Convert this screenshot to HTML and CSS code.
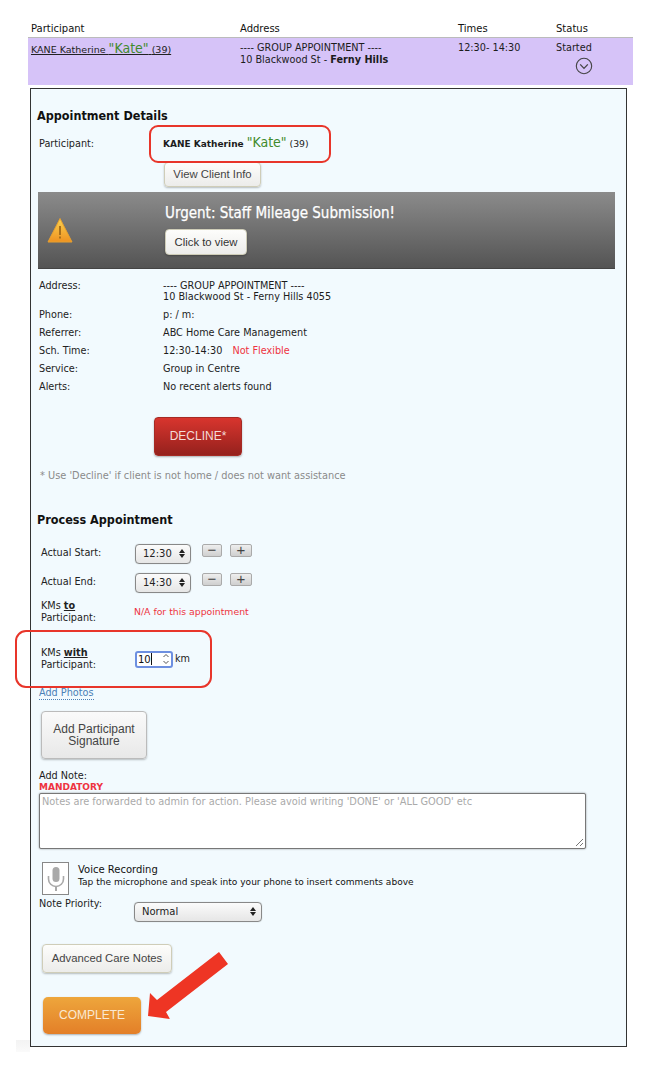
FILE: index.html
```html
<!DOCTYPE html>
<html lang="en">
<head>
<meta charset="utf-8">
<title>Appointment</title>
<link rel="stylesheet" href="styles.css">
</head>
<body>
<div class="page">
  <div class="thead">
    <div class="c1">Participant</div><div class="c2">Address</div><div class="c3">Times</div><div class="c4">Status</div>
  </div>
  <div class="trow">
    <div class="c1 clink"><u>KANE Katherine <span class="nick">"Kate"</span> </u><u>(39)</u></div>
    <div class="c2">---- GROUP APPOINTMENT ----<br>10 Blackwood St - <b>Ferny Hills</b></div>
    <div class="c3">12:30- 14:30</div>
    <div class="c4">Started
      <svg class="chev" width="18" height="18" viewBox="0 0 18 18"><circle cx="9" cy="9" r="7.7" fill="none" stroke="#444" stroke-width="1.1"/><path d="M5.2 7.4 9 11.4l3.8-4" fill="none" stroke="#444" stroke-width="1.3"/></svg>
    </div>
  </div>

  <div class="panel">
    <h2 class="h-details">Appointment Details</h2>
    <div class="row r-part">
      <div class="lab">Participant:</div>
      <div class="val"><b class="pname">KANE Katherine</b> <span class="nick2">"Kate"</span> (39)</div>
    </div>
    <div class="btn-line"><a class="btn b-client">View Client Info</a></div>
    <div class="banner">
      <svg class="warn" width="26" height="26" viewBox="0 0 26 26"><defs><linearGradient id="wg" x1="0" y1="0" x2="0" y2="1"><stop offset="0" stop-color="#fbd24f"/><stop offset="1" stop-color="#ee9221"/></linearGradient></defs><path d="M13 1.5 25 25H1z" fill="url(#wg)" stroke="#e9a12e" stroke-width="1" stroke-linejoin="round"/><rect x="12" y="9" width="2" height="9" fill="#a8701c"/><rect x="12" y="19.5" width="2" height="2" fill="#a8701c"/></svg>
      <div class="banner-main">
        <div class="banner-title">Urgent: Staff Mileage Submission!</div>
        <a class="btn b-view">Click to view</a>
      </div>
    </div>

    <div class="row r-addr"><div class="lab">Address:</div><div class="val">---- GROUP APPOINTMENT ----<br>10 Blackwood St - Ferny Hills 4055</div></div>
    <div class="row r-info"><div class="lab">Phone:</div><div class="val">p: / m:</div></div>
    <div class="row r-info"><div class="lab">Referrer:</div><div class="val">ABC Home Care Management</div></div>
    <div class="row r-info"><div class="lab">Sch. Time:</div><div class="val">12:30-14:30 <span class="red flex-note">Not Flexible</span></div></div>
    <div class="row r-info"><div class="lab">Service:</div><div class="val">Group in Centre</div></div>
    <div class="row r-info"><div class="lab">Alerts:</div><div class="val">No recent alerts found</div></div>

    <a class="btn-decline">DECLINE*</a>
    <p class="decline-note">* Use 'Decline' if client is not home / does not want assistance</p>

    <h2 class="h-process">Process Appointment</h2>
    <div class="prow r-start">
      <div class="plab">Actual Start:</div>
      <div class="sel sel-time">12:30<span class="updown"></span></div>
      <span class="step">&#8722;</span><span class="step s-plus">+</span>
    </div>
    <div class="prow r-end">
      <div class="plab">Actual End:</div>
      <div class="sel sel-time">14:30<span class="updown"></span></div>
      <span class="step">&#8722;</span><span class="step s-plus">+</span>
    </div>
    <div class="prow r-kmto">
      <div class="plab">KMs <u><b>to</b></u><br>Participant:</div>
      <div class="na red">N/A for this appointment</div>
    </div>
    <div class="prow r-kmwith">
      <div class="plab">KMs <u><b>with</b></u><br>Participant:</div>
      <div class="numbox">10<span class="caret"></span><span class="spin"><svg width="8" height="12" viewBox="0 0 8 12"><path d="M1.5 4 4 1.5 6.5 4M1.5 8 4 10.5 6.5 8" fill="none" stroke="#555" stroke-width="1"/></svg></span></div>
      <span class="km">km</span>
    </div>
    <a class="photos">Add Photos</a>
    <a class="btn b-sign">Add Participant<br>Signature</a>
    <div class="notelab">Add Note:<br><span class="red mand">MANDATORY</span></div>
    <div class="textarea">Notes are forwarded to admin for action. Please avoid writing 'DONE' or 'ALL GOOD' etc
      <svg class="grip" width="9" height="9" viewBox="0 0 9 9"><path d="M1 8 8 1M5 8 8 5" stroke="#777" stroke-width="1"/></svg>
    </div>
    <div class="voice">
      <div class="micbox"><svg width="20" height="28" viewBox="0 0 20 28"><rect x="6.5" y="2" width="7" height="15" rx="3.5" fill="#a9a9a9"/><path d="M2.5 11v3a7.5 7.5 0 0 0 15 0v-3" fill="none" stroke="#a9a9a9" stroke-width="1.6"/><path d="M10 21.5V26" stroke="#a9a9a9" stroke-width="2"/></svg></div>
      <div class="voice-text"><span class="voice-title">Voice Recording</span><br>Tap the microphone and speak into your phone to insert comments above</div>
    </div>
    <div class="priority">
      <div class="prlab">Note Priority:</div>
      <div class="sel sel-pri">Normal<span class="updown"></span></div>
    </div>
    <a class="btn b-care">Advanced Care Notes</a>
    <a class="btn-complete">COMPLETE</a>
  </div>

  <div class="mark mark-name"></div>
  <div class="mark mark-km"></div>
  <svg class="arrow" width="654" height="1088" viewBox="0 0 654 1088"><polygon points="219,952 228,964 166,1012 170,1019 148,1016 150,993 157,1000" fill="#ee3524"/></svg>
  <div class="corner-fade"></div>
</div>
</body>
</html>
```
FILE: styles.css
```css
* { box-sizing: border-box; }
html, body { margin: 0; padding: 0; background: #fff; }
body { font-family: "DejaVu Sans", Verdana, sans-serif; font-size: 9.7px; line-height: 12px; color: #1c1c1c; }
.page { position: relative; width: 654px; height: 1088px; padding-top: 22px; overflow: hidden; }

.thead, .trow { display: grid; grid-template-columns: 209px 218px 98px 1fr; margin-left: 28px; width: 605px; padding-left: 3px; }
.thead { height: 16px; padding-top: 1px; line-height: 12px; border-bottom: 1px solid #bbb; font-size: 10px; color: #111; }
.trow { height: 47px; background: #d6c3f8; padding-top: 4px; line-height: 12px; }
.clink { font-size: 9.5px; color: #222; }
.nick, .nick2 { font-family: "DejaVu Sans Condensed", "DejaVu Sans", sans-serif; font-stretch: condensed; font-size: 14px; color: #3f8a2c; }
.c4 { position: relative; }
.chev { display: block; margin: 3px 0 0 19px; }

.panel { margin: 3px 0 0 30px; width: 597px; height: 959px; background: #f2fafe; border: 1px solid #333; padding-left: 7px; position: relative; }
h2 { margin: 0 0 0 -1px; font-family: "DejaVu Sans Condensed", "DejaVu Sans", sans-serif; font-stretch: condensed; font-size: 12.5px; line-height: 16px; font-weight: 700; color: #111; }
.h-details { padding-top: 19px; height: 35px; }
.row { display: grid; grid-template-columns: 124px 1fr; padding-left: 1px; }
.lab, .plab { color: #222; }
.r-part { margin-top: 12px; height: 26px; line-height: 14px; }
.r-part .lab { padding-top: 1px; }
.pname { font-size: 9px; }
.r-part .val { font-size: 9.3px; line-height: 12px; }
.btn-line { margin: 0 0 0 126px; height: 30px; }
.btn { display: inline-block; font-family: "Liberation Sans", Arial, sans-serif; font-size: 11.3px; color: #444; background: linear-gradient(#fdfdfb, #ececea); border: 1px solid #cfcdb8; border-radius: 4px; box-shadow: 0 1px 2px rgba(0,0,0,.25); text-align: center; }
.b-client { width: 97px; height: 25px; line-height: 23px; }
.banner { display: flex; height: 77px; width: 577px; background: linear-gradient(#8b8b8b, #545454); border-bottom: 1px solid #444; }
.warn { margin: 25px 0 0 9px; flex: none; }
.banner-main { margin-left: 92px; padding-top: 13px; }
.banner-title { font-family: "DejaVu Sans Condensed", "DejaVu Sans", sans-serif; font-stretch: condensed; font-size: 15px; line-height: 17px; font-weight: 500; color: #fff; -webkit-text-stroke: .25px #fff; }
.b-view { width: 82px; height: 26px; line-height: 24px; margin-top: 7px; color: #333; }

.r-addr { margin-top: 11px; height: 29px; line-height: 11px; }
.r-info { height: 18px; line-height: 12px; }
.red { color: #ee3340; }
.flex-note { margin-left: 7px; }

.btn-decline { display: block; width: 88px; height: 39px; margin: 18px 0 0 116px; background: linear-gradient(#d8352e, #95211d); border: 1px solid #a52a24; border-radius: 4px; box-shadow: 0 1px 2px rgba(0,0,0,.3); color: #f4dcd8; font-family: "Liberation Sans", Arial, sans-serif; font-size: 12px; line-height: 37px; text-align: center; }
.decline-note { margin: 14px 0 0 2px; font-size: 9.8px; color: #8a8a8a; line-height: 12px; }
.h-process { margin-top: 30px; }

.prow { display: flex; align-items: flex-start; padding-left: 3px; }
.plab { width: 94px; flex: none; }
.r-start { margin-top: 16px; height: 29px; }
.r-end { height: 27px; }
.r-start .plab, .r-end .plab { padding-top: 3px; }
.sel { position: relative; font-size: 10px; border: 1px solid #888; border-radius: 4px; background: linear-gradient(#fbfbfb, #e6e6e6); color: #222; box-shadow: 0 0 1px rgba(0,0,0,.3); }
.sel-time { width: 56px; height: 20px; line-height: 18px; padding-left: 7px; margin-right: 11px; }
.updown { position: absolute; right: 5px; top: 50%; width: 0; height: 9px; margin-top: -5px; border-left: 3px solid transparent; border-right: 3px solid transparent; }
.updown::before, .updown::after { content: ""; position: absolute; left: -3px; border-left: 3px solid transparent; border-right: 3px solid transparent; }
.updown::before { top: 0; border-bottom: 4px solid #222; }
.updown::after { bottom: 0; border-top: 4px solid #222; }
.step { display: block; width: 20px; height: 13px; background: linear-gradient(#eee, #cfcfcf); border: 1px solid #aaa; border-radius: 2px; font: 400 15px/10px "Liberation Sans", Arial, sans-serif; color: #444; text-align: center; }
.s-plus { width: 22px; margin-left: 8px; }
.r-kmto { height: 47px; line-height: 11.5px; }
.na { font-size: 9.3px; line-height: 12px; padding-top: 6px; margin-left: -1px; }
.r-kmwith { height: 40px; line-height: 12px; }
.numbox { position: relative; width: 38px; height: 17px; margin-top: 4px; background: #fff; border: 2px solid #6d8fe0; border-radius: 3px; font-size: 10px; line-height: 14px; padding-left: 1px; color: #111; }
.caret { display: inline-block; width: 1px; height: 12px; background: #111; vertical-align: -2px; }
.spin { position: absolute; right: 1px; top: 0; }
.km { margin: 5px 0 0 2px; line-height: 14px; }
.photos { display: block; margin-left: 1px; width: 55px; color: #4a7fb5; border-bottom: 1px dotted #4a7fb5; line-height: 12px; height: 13px; }
.b-sign { display: block; width: 106px; height: 48px; margin: 11px 0 0 3px; padding-top: 11px; line-height: 12px; font-size: 12px; background: linear-gradient(#fafafa, #e8e8e8); border: 1px solid #bbb; }
.notelab { margin: 11px 0 0 1px; line-height: 11px; }
.mand { font-weight: 700; font-size: 9px; }
.textarea { position: relative; width: 547px; height: 56px; margin: 0 0 0 1px; background: #fff; border: 1px solid #777; border-radius: 2px; box-shadow: 0 0 2px rgba(0,0,0,.45); padding: 2px; font-size: 9.8px; color: #aaa; }
.grip { position: absolute; right: 1px; bottom: 1px; }
.voice { display: flex; margin: 13px 0 0 4px; }
.micbox { width: 27px; height: 33px; background: #fff; border: 1px solid #888; display: flex; align-items: center; justify-content: center; flex: none; }
.voice-text { margin-left: 9px; padding-top: 2px; font-size: 9.05px; color: #111; }
.voice-title { font-size: 10px; }
.priority { display: flex; margin: 3px 0 0 1px; }
.prlab { width: 95px; }
.sel-pri { width: 128px; height: 20px; line-height: 18px; padding-left: 7px; margin-top: 4px; }
.b-care { display: block; width: 130px; height: 29px; line-height: 27px; margin: 22px 0 0 4px; }
.btn-complete { display: block; width: 98px; height: 37px; margin: 24px 0 0 5px; background: linear-gradient(#eea63c, #e37f28); border-radius: 5px; box-shadow: 0 1px 2px rgba(0,0,0,.3); color: #f9e9d3; font-family: "Liberation Sans", Arial, sans-serif; font-size: 12px; line-height: 37px; text-align: center; }

.mark { position: absolute; border: 2px solid #e8352a; border-radius: 9px; pointer-events: none; }
.mark-name { left: 149px; top: 125px; width: 182px; height: 38px; }
.mark-km { left: 15px; top: 630px; width: 197px; height: 58px; border-radius: 11px; }
.arrow { position: absolute; left: 0; top: 0; pointer-events: none; }
.corner-fade { position: absolute; left: 16px; top: 1040px; width: 14px; height: 12px; background: linear-gradient(#f3f3f3, #fafafa); }
```
